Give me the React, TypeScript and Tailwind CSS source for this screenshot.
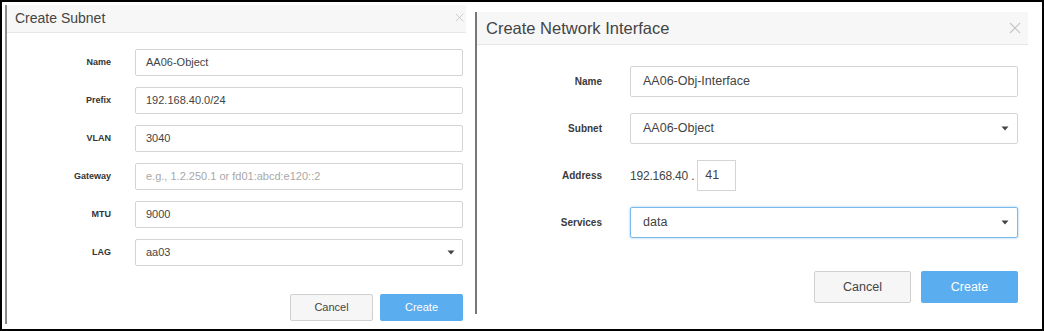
import React from "react";

const font = { fontFamily: '"Liberation Sans", Arial, sans-serif' };

const CloseX = ({ size, className }: { size: number; className?: string }) => (
  <svg width={size} height={size} viewBox="0 0 12 12" className={className}>
    <path d="M1 1L11 11M11 1L1 11" stroke="#c4c4c4" strokeWidth="1.1" fill="none" />
  </svg>
);

const Caret = () => (
  <svg width="8" height="5" viewBox="0 0 8 5" className="shrink-0">
    <path d="M0.5 0.5h7L4 4.5z" fill="#444" />
  </svg>
);

const leftRows = [
  { label: "Name", value: "AA06-Object" },
  { label: "Prefix", value: "192.168.40.0/24" },
  { label: "VLAN", value: "3040" },
  { label: "Gateway", placeholder: "e.g., 1.2.250.1 or fd01:abcd:e120::2" },
  { label: "MTU", value: "9000" },
  { label: "LAG", value: "aa03", select: true },
];

type Row = { label: string; value?: string; placeholder?: string; select?: boolean };

const LeftField = ({ row }: { row: Row }) => (
  <div className="flex items-center">
    <div className="w-[104px] text-right text-[9px] font-bold text-[#333]">{row.label}</div>
    <div className="ml-[24px] flex h-[27px] w-[328px] items-center justify-between rounded-[2px] border border-[#d4d4d4] bg-white pl-[10px] pr-[7px] text-[11px]">
      {row.value ? (
        <span className="text-[#444]">{row.value}</span>
      ) : (
        <span className="text-[#a8a8a8]">{row.placeholder}</span>
      )}
      {row.select && <Caret />}
    </div>
  </div>
);

const CreateSubnet = () => (
  <div className="ml-[3px] mt-[3px] flex h-[319px] w-[461px] flex-col border-l-2 border-[#8a8a8a] bg-white">
    <div className="flex h-[28px] items-center justify-between border-b border-[#e6e6e6] bg-[#f7f7f7] pl-[8px] pr-[2px]">
      <span className="text-[14px] text-[#444]">Create Subnet</span>
      <CloseX size={9} className="mb-[2px]" />
    </div>
    <div className="flex flex-col gap-[11px] pt-[16px]">
      {leftRows.map((r) => (
        <LeftField key={r.label} row={r} />
      ))}
    </div>
    <div className="mt-[28px] flex w-[456px] justify-end gap-[7px]">
      <button className="h-[27px] w-[83px] rounded-[2px] border border-[#d0d0d0] bg-[#f6f6f6] text-[11px] text-[#444]">
        Cancel
      </button>
      <button className="h-[27px] w-[83px] rounded-[2px] bg-[#5aadee] text-[11px] text-white">
        Create
      </button>
    </div>
  </div>
);

const RightLabel = ({ children }: { children: React.ReactNode }) => (
  <div className="w-[125px] text-right text-[10px] font-bold text-[#3a3a3a]">{children}</div>
);

const CreateInterface = () => (
  <div className="ml-[9px] mt-[10px] flex h-[302px] w-[553px] flex-col border-l-2 border-[#777] bg-white">
    <div className="flex h-[33px] items-center justify-between border-b border-[#e6e6e6] bg-[#f7f7f7] pl-[9px] pr-[7px]">
      <span className="text-[16.5px] text-[#444]">Create Network Interface</span>
      <CloseX size={12} />
    </div>
    <div className="flex flex-col gap-[16px] pt-[21px]">
      <div className="flex items-center">
        <RightLabel>Name</RightLabel>
        <div className="ml-[28px] flex h-[31px] w-[388px] items-center rounded-[2px] border border-[#d4d4d4] pl-[12px] text-[12.5px] text-[#444]">
          AA06-Obj-Interface
        </div>
      </div>
      <div className="flex items-center">
        <RightLabel>Subnet</RightLabel>
        <div className="ml-[28px] flex h-[31px] w-[388px] items-center justify-between rounded-[2px] border border-[#d4d4d4] pl-[12px] pr-[8px] text-[12.5px] text-[#444]">
          <span>AA06-Object</span>
          <Caret />
        </div>
      </div>
      <div className="flex items-center">
        <RightLabel>Address</RightLabel>
        <span className="ml-[28px] text-[12px] tracking-[-0.2px] text-[#444]">192.168.40 .</span>
        <div className="ml-[3px] flex h-[31px] w-[39px] items-center border border-[#d4d4d4] pl-[7px] text-[12.5px] text-[#444]">
          41
        </div>
      </div>
      <div className="flex items-center">
        <RightLabel>Services</RightLabel>
        <div className="ml-[28px] flex h-[31px] w-[388px] items-center justify-between rounded-[2px] border border-[#7ab8ea] pl-[12px] pr-[8px] text-[12.5px] text-[#444] shadow-[0_0_3px_rgba(102,175,233,0.6)]">
          <span>data</span>
          <Caret />
        </div>
      </div>
    </div>
    <div className="mt-[33px] flex w-[541px] justify-end gap-[10px]">
      <button className="h-[32px] w-[97px] rounded-[2px] border border-[#d0d0d0] bg-[#f6f6f6] text-[12.5px] text-[#444]">
        Cancel
      </button>
      <button className="h-[32px] w-[97px] rounded-[2px] bg-[#5aadee] text-[12.5px] text-white">
        Create
      </button>
    </div>
  </div>
);

export default function App() {
  return (
    <div style={font} className="flex h-[331px] w-[1044px] items-start border-2 border-black bg-white">
      <CreateSubnet />
      <CreateInterface />
    </div>
  );
}
